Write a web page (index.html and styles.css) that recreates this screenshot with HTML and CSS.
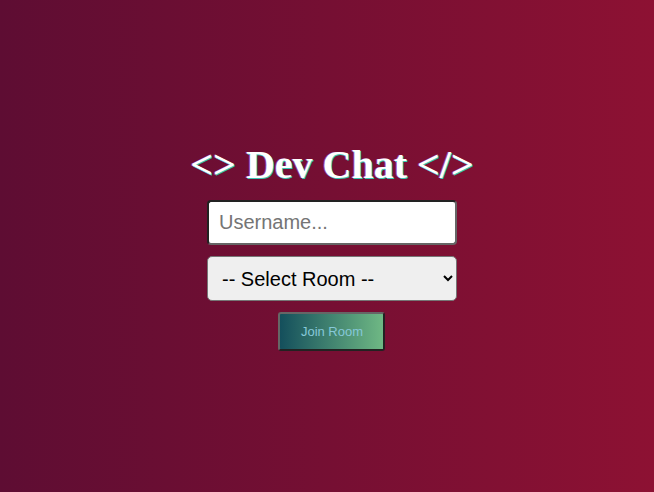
FILE: index.html
```html
<!DOCTYPE html>
<html>
<head>
<meta charset="utf-8">
<link rel="stylesheet" href="styles.css">
</head>
<body>
<div class="join">
  <h1 class="title">&lt;&gt; Dev Chat &lt;/&gt;</h1>
  <input class="field" type="text" placeholder="Username...">
  <select class="room">
    <option>-- Select Room --</option>
  </select>
  <button class="btn">Join Room</button>
</div>
</body>
</html>
```
FILE: styles.css
```css
html, body { margin: 0; height: 100%; }
body {
  background: linear-gradient(to right, #5e0d33, #8d1133);
  display: flex;
  align-items: center;
  justify-content: center;
  padding-left: 10px;
  box-sizing: border-box;
  font-family: "Liberation Sans", Arial, sans-serif;
}
.join {
  display: flex;
  flex-direction: column;
  align-items: center;
}
.title {
  font-family: "Liberation Serif", "Times New Roman", serif;
  font-size: 40px;
  font-weight: bold;
  color: #fff;
  text-shadow: 1px 1px 0 #3cc8b4, -1px 0 0 rgba(200, 120, 255, 0.5);
  margin: 0 0 12px;
}
.field {
  width: 250px;
  height: 45px;
  box-sizing: border-box;
  border: 2px solid #222;
  border-right-color: #666;
  border-bottom-color: #666;
  border-radius: 4px;
  padding: 0 10px;
  font-size: 20px;
  font-family: "Liberation Sans", Arial, sans-serif;
  background: #fff;
}
.field::placeholder { color: #757575; }
.room {
  margin-top: 11px;
  width: 250px;
  height: 45px;
  box-sizing: border-box;
  border: 1px solid #767676;
  border-radius: 5px;
  background: #efefef;
  font-size: 20px;
  padding: 0 10px;
  font-family: "Liberation Sans", Arial, sans-serif;
  color: #000;
}
.btn {
  margin-top: 11px;
  width: 107px;
  height: 39px;
  border: 2px solid #666;
  border-right-color: #222;
  border-bottom-color: #222;
  border-radius: 3px;
  background: linear-gradient(to right, #144f5c, #6fb884);
  color: #86c8d8;
  font-size: 13px;
  font-family: "Liberation Sans", Arial, sans-serif;
}
```
